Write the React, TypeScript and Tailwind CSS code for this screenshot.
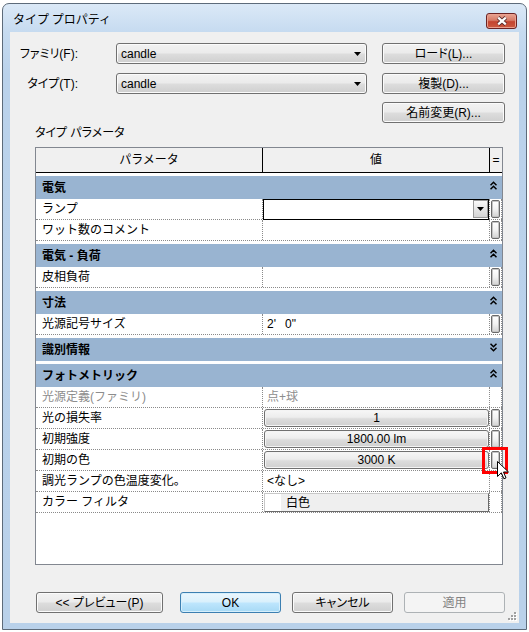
type Row = {
  name: string
  kind: 'combo' | 'empty' | 'size' | 'text' | 'button' | 'swatch'
  value?: string
  side?: boolean
  disabled?: boolean
}

const SECTIONS: { title: string; open: boolean; rows: Row[] }[] = [
  {
    title: '電気',
    open: true,
    rows: [
      { name: 'ランプ', kind: 'combo', side: true },
      { name: 'ワット数のコメント', kind: 'empty', side: true },
    ],
  },
  { title: '電気 - 負荷', open: true, rows: [{ name: '皮相負荷', kind: 'empty', side: true }] },
  { title: '寸法', open: true, rows: [{ name: '光源記号サイズ', kind: 'size', side: true }] },
  { title: '識別情報', open: false, rows: [] },
  {
    title: 'フォトメトリック',
    open: true,
    rows: [
      { name: '光源定義(ファミリ)', kind: 'text', value: '点+球', disabled: true },
      { name: '光の損失率', kind: 'button', value: '1', side: true },
      { name: '初期強度', kind: 'button', value: '1800.00 lm', side: true },
      { name: '初期の色', kind: 'button', value: '3000 K', side: true },
      { name: '調光ランプの色温度変化。', kind: 'text', value: '<なし>' },
      { name: 'カラー フィルタ', kind: 'swatch', value: '白色' },
    ],
  },
]

const BTN =
  'flex items-center justify-center rounded-[3px] border border-[#707070] bg-[linear-gradient(180deg,#f2f2f2_0%,#ebebeb_48%,#dddddd_52%,#cfcfcf_100%)] shadow-[inset_0_0_0_1px_#fbfbfb]'

function Chevrons({ up }: { up: boolean }) {
  return (
    <svg width="7" height="9" viewBox="0 0 7 9">
      <path
        d={up ? 'M0.5 4.2L3.5 1.2L6.5 4.2M0.5 8.2L3.5 5.2L6.5 8.2' : 'M0.5 0.8L3.5 3.8L6.5 0.8M0.5 4.8L3.5 7.8L6.5 4.8'}
        fill="none"
        stroke="#000"
        strokeWidth="1.5"
      />
    </svg>
  )
}

function DownArrow() {
  return (
    <svg width="7" height="4" viewBox="0 0 7 4">
      <path d="M0 0H7L3.5 4Z" fill="#000" />
    </svg>
  )
}

function Combo({ value, className }: { value: string; className: string }) {
  return (
    <div className={`${BTN} justify-between! pl-[4px] pr-[5px] h-[21px] ${className}`}>
      <span>{value}</span>
      <DownArrow />
    </div>
  )
}

function SideButton() {
  return (
    <div className="ml-[1px] w-[9px] h-[18px] rounded-[2px] border border-[#6a6a6a] shadow-[inset_0_0_0_1px_#c4c4c4] bg-[linear-gradient(180deg,#ffffff_0%,#f2f2f2_50%,#d2d2d2_100%)]" />
  )
}

function Value({ row }: { row: Row }) {
  switch (row.kind) {
    case 'combo':
      return (
        <div className="w-full h-[21px] border border-black bg-white flex justify-end items-start pt-[0px] pr-[0px]">
          <div className="w-[15px] h-[18px] border border-[#9a9a9a] bg-[linear-gradient(180deg,#fafafa_0%,#e6e6e6_50%,#d4d4d4_100%)] flex items-center justify-center">
            <DownArrow />
          </div>
        </div>
      )
    case 'size':
      return (
        <div className="pl-[4px] flex items-center">
          <span>2'</span>
          <span className="ml-[9px]">0"</span>
        </div>
      )
    case 'text':
      return (
        <div className={`pl-[4px] flex items-center ${row.disabled ? 'text-[#8d8d8d]' : ''}`}>{row.value}</div>
      )
    case 'button':
      return (
        <div className="ml-[1px] mt-[1px] w-[225px] h-[18px] rounded-[3px] border border-[#707070] shadow-[inset_0_0_0_1px_#f4f4f4] bg-[linear-gradient(180deg,#f7f7f7_0%,#ededed_45%,#dcdcdc_55%,#d0d0d0_100%)] flex items-center justify-center">
          {row.value}
        </div>
      )
    case 'swatch':
      return (
        <div className="ml-[1px] mt-[1px] w-[225px] h-[19px] border border-[#c8c8c8] border-r-[#6a6a6a] border-b-[#6a6a6a] bg-[#efefef] flex items-center">
          <div className="w-[16px] h-full bg-white" />
          <span className="pl-[5px]">{row.value}</span>
        </div>
      )
    default:
      return null
  }
}

function DataRow({ row }: { row: Row }) {
  return (
    <div className="flex h-[21px] border-b border-dotted border-[#8a8a8a]">
      <div
        className={`w-[227px] shrink-0 border-r border-dotted border-[#8a8a8a] pl-[6px] flex items-center ${row.disabled ? 'text-[#8d8d8d]' : ''}`}
      >
        {row.name}
      </div>
      <div className="w-[227px] shrink-0 border-r border-dotted border-[#8a8a8a] flex">
        <Value row={row} />
      </div>
      <div className="w-[12px] shrink-0 border-r border-dotted border-[#8a8a8a] pt-[1px]">
        {row.side && <SideButton />}
      </div>
    </div>
  )
}

function Cursor() {
  return (
    <svg width="12" height="19" viewBox="0 0 12 19">
      <path d="M0.5 0.5V15.5L4.3 11.8L6.9 17.8L9 16.9L6.5 11H11.5Z" fill="#fff" stroke="#000" strokeWidth="1" strokeLinejoin="round" />
    </svg>
  )
}

function Grip() {
  const dots = [
    [6, 0],
    [6, 3],
    [3, 3],
    [6, 6],
    [3, 6],
    [0, 6],
  ]
  return (
    <svg width="9" height="9" viewBox="0 0 9 9">
      {dots.map(([x, y]) => (
        <g key={`${x}-${y}`}>
          <rect x={x + 1} y={y + 1} width="2" height="2" fill="#fff" />
          <rect x={x} y={y} width="2" height="2" fill="#a0a0a0" />
        </g>
      ))}
    </svg>
  )
}

export default function App() {
  return (
    <div className="w-[529px] h-[632px] bg-white pt-[3px] pl-[2px] font-['Liberation_Sans','Noto_Sans_CJK_JP',sans-serif] text-[12px] leading-[16px] text-black">
      <div className="w-[525px] h-[627px] border border-[#5d6b7a] rounded-t-[7px] bg-[linear-gradient(180deg,#dbe9f7_0px,#c6dbf0_28px,#bad2eb_70px,#b9d1ea_100%)] px-[7px] pb-[6px] flex flex-col">
        {/* title bar */}
        <div className="h-[28px] flex items-start justify-between shrink-0">
          <div className="pt-[7px] pl-[3px] font-['Noto_Sans_CJK_JP',sans-serif]">タイプ プロパティ</div>
          <div className="mt-[9px] mr-[2px] w-[31px] h-[16px] rounded-[3px] border border-[#6b2323] bg-[linear-gradient(180deg,#e8a493_0%,#d67a66_45%,#c4442f_55%,#cc5a40_100%)] shadow-[inset_0_0_0_1px_#eaa08f] flex items-center justify-center">
            <svg width="12" height="10" viewBox="0 0 12 10">
              <path d="M2.2 1.6L9.8 8.4M9.8 1.6L2.2 8.4" stroke="#5a2a2a" strokeWidth="4" />
              <path d="M2.2 1.6L9.8 8.4M9.8 1.6L2.2 8.4" stroke="#fff" strokeWidth="2.2" />
            </svg>
          </div>
        </div>

        {/* client area */}
        <div className="flex-1 bg-[#f0f0f0] relative flex flex-col [font-feature-settings:'palt']">
          <div className="flex items-center mt-[11px] h-[21px]">
            <div className="w-[68px] text-right">ファミリ(F):</div>
            <Combo value="candle" className="ml-[38px] w-[251px]" />
            <div className={`${BTN} ml-[15px] w-[123px] h-[21px]`}>ロード(L)...</div>
          </div>
          <div className="flex items-center mt-[9px] h-[21px]">
            <div className="w-[68px] text-right">タイプ(T):</div>
            <Combo value="candle" className="ml-[38px] w-[251px]" />
            <div className={`${BTN} ml-[15px] w-[123px] h-[21px]`}>複製(D)...</div>
          </div>
          <div className="flex mt-[8px] h-[21px]">
            <div className={`${BTN} ml-[372px] w-[123px] h-[21px]`}>名前変更(R)...</div>
          </div>

          <div className="mt-[2px] ml-[25px]">タイプ パラメータ</div>

          {/* property grid */}
          <div className="mt-[6px] ml-[25px] w-[468px] h-[418px] shrink-0 border border-[#828790] bg-white relative [font-feature-settings:normal]">
            <div className="flex h-[25px] bg-[#f0f0f0] border-b border-black">
              <div className="w-[227px] shrink-0 border-r border-black flex items-center justify-center">パラメータ</div>
              <div className="w-[227px] shrink-0 border-r border-black flex items-center justify-center">値</div>
              <div className="flex-1 flex items-center justify-center">=</div>
            </div>

            {SECTIONS.map((s) => (
              <div key={s.title}>
                <div className="mt-[3px] h-[23px] bg-[#99b4d1] flex items-center">
                  <span className="flex-1 pl-[6px] font-bold">{s.title}</span>
                  <span className="w-[12px] flex -mt-[5px]">
                    <Chevrons up={s.open} />
                  </span>
                </div>
                {s.rows.map((r) => (
                  <DataRow key={r.name} row={r} />
                ))}
              </div>
            ))}

            {/* highlight + mouse pointer */}
            <div className="absolute left-[446px] top-[299px] w-[26px] h-[27px] border-[3px] border-[#ff0000]" />
            <div className="absolute left-[461px] top-[313px]">
              <Cursor />
            </div>
          </div>

          <div className="flex mt-[27px] ml-[26px] h-[21px]">
            <div className={`${BTN} w-[127px]`}>{'<< プレビュー(P)'}</div>
            <div className="ml-[17px] w-[101px] flex items-center justify-center rounded-[3px] border border-[#3c7fb1] bg-[linear-gradient(180deg,#eaf6fd_0%,#d9f0fc_48%,#bee6fd_52%,#a7d9f5_100%)] shadow-[inset_0_0_0_1px_#d6effc]">
              OK
            </div>
            <div className={`${BTN} ml-[11px] w-[101px]`}>キャンセル</div>
            <div className="ml-[11px] w-[101px] flex items-center justify-center rounded-[3px] border border-[#adb2b5] bg-[#f4f4f4] text-[#838383]">
              適用
            </div>
          </div>

          <div className="absolute right-[2px] bottom-[2px]">
            <Grip />
          </div>
        </div>
      </div>
    </div>
  )
}
